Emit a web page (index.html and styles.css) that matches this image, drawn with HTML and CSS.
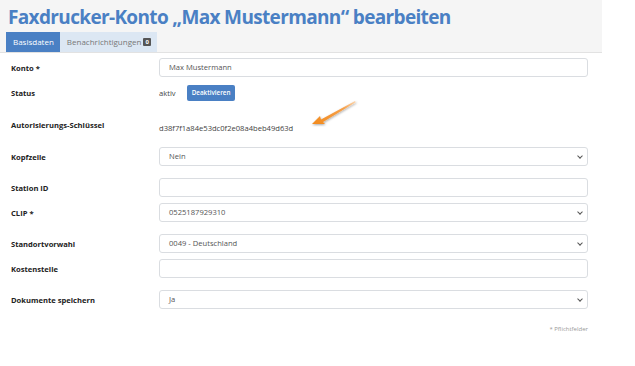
FILE: index.html
```html
<!DOCTYPE html>
<html lang="de">
<head>
<meta charset="utf-8">
<link rel="stylesheet" href="styles.css">
</head>
<body>
<div class="header">
  <h1 class="title">Faxdrucker-Konto „Max Mustermann“ bearbeiten</h1>
  <div class="tabs">
    <div class="tab active">Basisdaten</div>
    <div class="tab">Benachrichtigungen <span class="badge">0</span></div>
  </div>
</div>
<div class="form">
  <div class="row r-konto"><div class="label">Konto *</div><div class="control"><div class="input">Max Mustermann</div></div></div>
  <div class="row r-status"><div class="label">Status</div><div class="control status"><span class="plain">aktiv</span><span class="btn">Deaktivieren</span></div></div>
  <div class="row r-key"><div class="label">Autorisierungs-Schlüssel</div><div class="control"><span class="plain">d38f7f1a84e53dc0f2e08a4beb49d63d</span></div></div>
  <div class="row r-after-key"><div class="label">Kopfzeile</div><div class="control"><div class="input select">Nein<span class="chev"></span></div></div></div>
  <div class="row r-loose"><div class="label">Station ID</div><div class="control"><div class="input"></div></div></div>
  <div class="row r-tight"><div class="label">CLIP *</div><div class="control"><div class="input select">0525187929310<span class="chev"></span></div></div></div>
  <div class="row r-loose"><div class="label">Standortvorwahl</div><div class="control"><div class="input select">0049 - Deutschland<span class="chev"></span></div></div></div>
  <div class="row r-tight"><div class="label">Kostenstelle</div><div class="control"><div class="input"></div></div></div>
  <div class="row r-loose"><div class="label">Dokumente speichern</div><div class="control"><div class="input select">Ja<span class="chev"></span></div></div></div>
  <div class="note">* Pflichtfelder</div>
</div>
<svg class="arrow" width="60" height="40" viewBox="0 0 60 40">
  <defs>
    <linearGradient id="ag" x1="0" y1="1" x2="1" y2="0">
      <stop offset="0" stop-color="#f28a1c"/>
      <stop offset="0.7" stop-color="#f6a04a"/>
      <stop offset="1" stop-color="#fbd9b5"/>
    </linearGradient>
    <filter id="sh" x="-20%" y="-20%" width="140%" height="140%">
      <feDropShadow dx="0.5" dy="1" stdDeviation="0.8" flood-color="#000" flood-opacity="0.35"/>
    </filter>
  </defs>
  <path d="M4 32 L12 24 L13 27.5 L47 9 L47.8 10.2 L15 30 L17 32 Z" fill="url(#ag)" filter="url(#sh)"/>
</svg>
</body>
</html>
```
FILE: styles.css
```css
body {
  margin: 0;
  background: #fff;
  font-family: "Open Sans", "Liberation Sans", sans-serif;
  color: #333;
  position: relative;
  width: 635px;
  height: 366px;
  overflow: hidden;
}
.header {
  width: 602px;
  background: #f5f5f5;
  border-bottom: 1px solid #e2e2e2;
  padding-top: 4px;
  height: 48px;
  box-sizing: content-box;
}
.title {
  margin: 0 0 0 8px;
  font-size: 19px;
  line-height: 26px;
  font-weight: 700;
  color: #4a80c4;
  letter-spacing: -0.65px;
}
.tabs {
  display: flex;
  margin-left: 6px;
  margin-top: 2px;
}
.tab {
  height: 20px;
  line-height: 20px;
  font-size: 8px;
  padding: 0 6px 0 7px;
  background: #dce7f3;
  color: #777;
  display: flex;
  align-items: center;
  gap: 2px;
}
.tab.active {
  background: #4a80c4;
  color: #fff;
}
.badge {
  display: inline-block;
  background: #555;
  color: #fff;
  font-size: 6px;
  font-weight: 700;
  line-height: 8px;
  padding: 0 2px;
  border-radius: 1px;
}
.form {
  width: 577px;
  margin-left: 11px;
}
.row {
  display: grid;
  grid-template-columns: 148px 429px;
  align-items: center;
}
.r-konto { margin-top: 5px; }
.r-status { margin-top: 8px; }
.r-key { margin-top: 13px; height: 18px; }
.r-after-key { margin-top: 15px; }
.r-loose { margin-top: 12px; }
.r-tight { margin-top: 6px; }
.label {
  font-size: 7.6px;
  font-weight: 700;
  color: #222;
}
.input {
  height: 19px;
  box-sizing: border-box;
  border: 1px solid #dadde1;
  border-radius: 3px;
  font-size: 7.6px;
  color: #555;
  line-height: 17px;
  padding: 0 9px;
  position: relative;
  background: #fff;
}
.chev {
  position: absolute;
  right: 5px;
  top: 6px;
  width: 3px;
  height: 3px;
  border-right: 1.2px solid #555;
  border-bottom: 1.2px solid #555;
  transform: rotate(45deg);
}
.status {
  display: flex;
  align-items: center;
  gap: 11px;
}
.plain {
  font-size: 7.6px;
  color: #444;
}
.btn {
  background: #4a80c4;
  color: #fff;
  font-size: 6.3px;
  font-weight: 600;
  height: 16px;
  line-height: 16px;
  padding: 0 5px;
  border-radius: 2px;
}
.note {
  text-align: right;
  font-size: 6px;
  color: #999;
  margin-top: 16px;
}
.arrow {
  position: absolute;
  left: 308px;
  top: 92px;
}
```
